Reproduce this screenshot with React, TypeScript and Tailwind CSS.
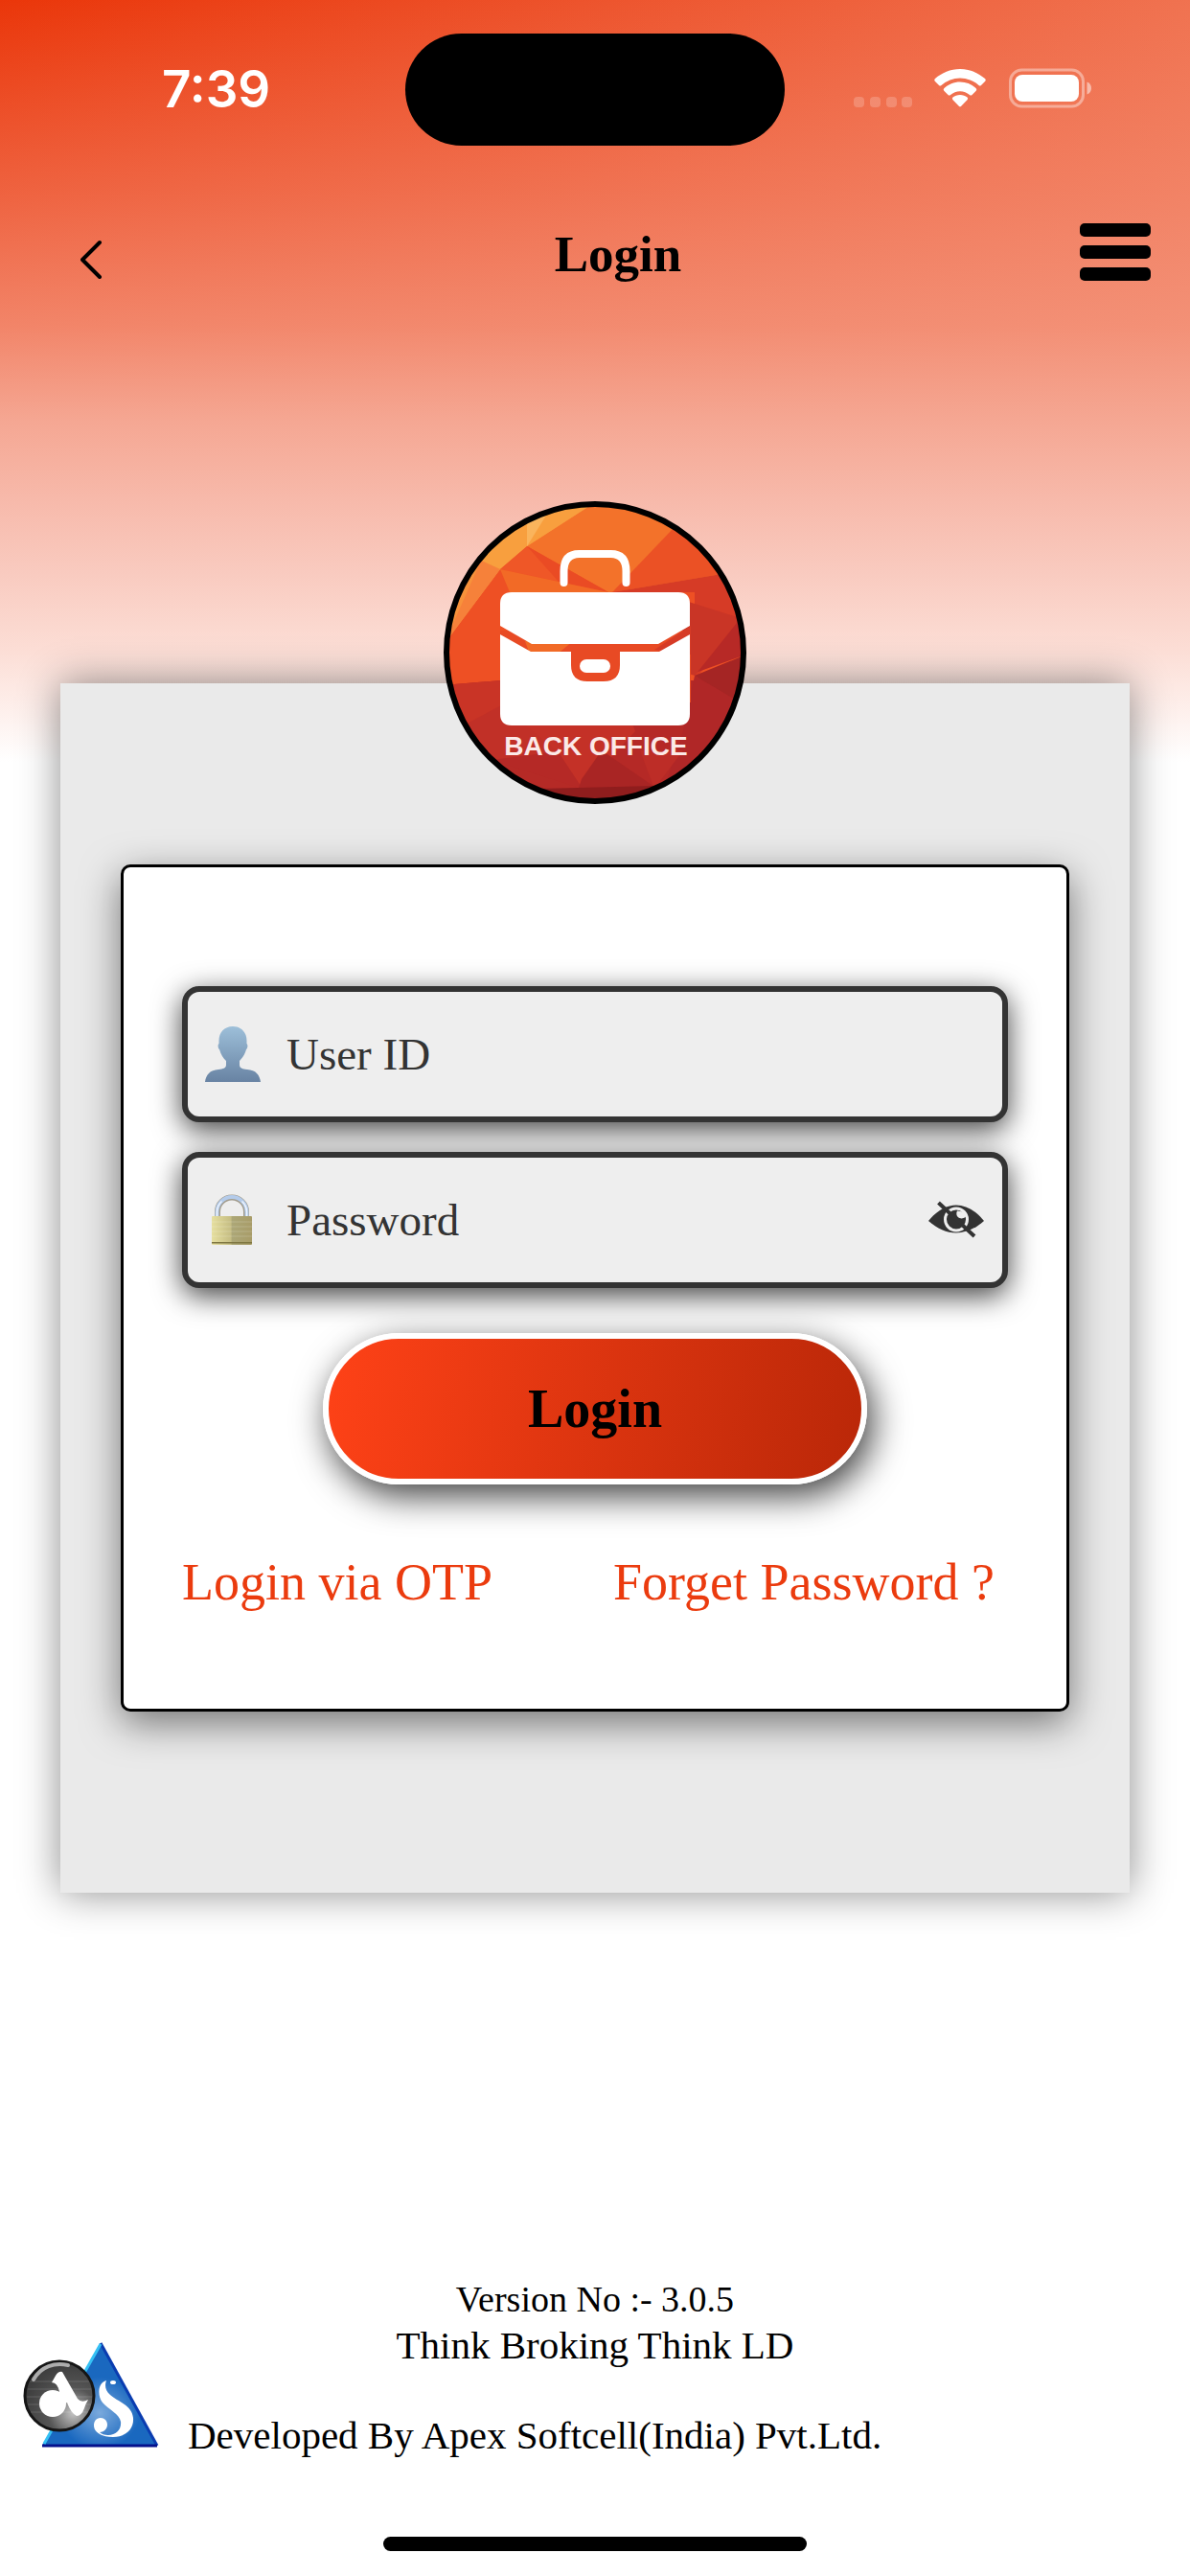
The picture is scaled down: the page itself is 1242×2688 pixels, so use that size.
import { useState } from 'react';

const App = () => {
  return (
    <div className="min-h-screen flex flex-col bg-white bg-[linear-gradient(to_bottom,rgba(244,150,126,0),rgba(244,150,126,0.46)_200px,rgba(244,152,128,0.80)_340px,#f5a793_440px,#f7b9aa_520px,#f9cbc0_600px,#fcded6_680px,#ffffff_795px),linear-gradient(to_right,#ea360a,#f07250)] text-black font-['Liberation_Serif','Times_New_Roman',serif]">
      <StatusBar />
      <Header />
      <main className="px-[63px] pt-[182px]">
        <LoginPanel />
      </main>
      <Footer />
    </div>
  );
};

const StatusBar = () => {
  return (
    <div className="h-[186px] px-[103px] grid grid-cols-[1fr_396px_1fr] text-white">
      <div className="pt-[61px] pl-[66px] text-[53px] leading-[64px] font-semibold font-['Inter',sans-serif]">7:39</div>
      <div className="mt-[35px] h-[117px] rounded-full bg-black" />
      <div className="pt-[71px] flex items-start justify-end">
        <svg width="249" height="42" viewBox="0 0 249 42" fill="none" aria-hidden="true">
          <g fill="#fff" fillOpacity="0.2">
            <rect x="1" y="30" width="11" height="11" rx="4" />
            <rect x="18" y="30" width="11" height="11" rx="4" />
            <rect x="35" y="30" width="11" height="11" rx="4" />
            <rect x="51" y="30" width="11" height="11" rx="4" />
          </g>
          <g fill="#fff">
            <path d="M112 1c10 0 19 4 26 10q1.500 1.500 0 3l-4 4q-1.200 1-2.500 0a29 29 0 0 0-39 0q-1.300 1-2.500 0l-4-4q-1.500-1.500 0-3C93 5 102 1 112 1z" />
            <path d="M112 14.500c6.500 0 12 2.400 16.500 6.500q1.500 1.500 0 3l-4 4q-1.200 1-2.500 0a15 15 0 0 0-20 0q-1.300 1-2.500 0l-4-4q-1.500-1.500 0-3c4.500-4.100 10-6.500 16.500-6.500z" />
            <path d="M112 28c3 0 5.500 1 7.500 2.600q1.400 1.300 0 2.700l-6.300 6.500q-1.200 1-2.400 0l-6.300-6.500q-1.400-1.400 0-2.700c2-1.600 4.500-2.600 7.500-2.600z" />
          </g>
          <rect x="164.500" y="2" width="76" height="38" rx="12" stroke="#fff" strokeOpacity="0.4" strokeWidth="3" />
          <rect x="169" y="7" width="67" height="28" rx="8" fill="#fff" />
          <path d="M244.500 14.500c3 1.200 4.500 3.500 4.500 6.500s-1.500 5.300-4.500 6.500z" fill="#fff" fillOpacity="0.5" />
        </svg>
      </div>
    </div>
  );
};

const Header = () => {
  return (
    <header className="h-[155px] pt-[26px] pl-[84px] pr-[41px] flex items-start justify-between">
      <button type="button" aria-label="Back" className="w-[79px] pt-[38px]">
        <svg width="24" height="42" viewBox="0 0 24 42" fill="none" stroke="#000" strokeWidth="4" strokeLinecap="round" strokeLinejoin="round">
          <path d="M20 3 2 21l18 18" />
        </svg>
      </button>
      <h1 className="pt-[23px] text-[53px] leading-[60px] font-bold">Login</h1>
      <button type="button" aria-label="Menu" className="pt-[21px]">
        <svg width="74" height="60" viewBox="0 0 74 60">
          <rect y="0" width="74" height="14" rx="5" />
          <rect y="23" width="74" height="14" rx="5" />
          <rect y="46" width="74" height="14" rx="5" />
        </svg>
      </button>
    </header>
  );
};

const LoginPanel = () => {
  return (
    <section className="mt-[190px] px-[63px] pb-[189px] flex flex-col bg-[#eaeaea] shadow-[0_0_40px_rgba(0,0,0,0.45)]">
      <div className="-mt-[190px] mb-[63px] self-center">
        <BackOfficeLogo />
      </div>
      <LoginForm />
    </section>
  );
};

const LoginForm = () => {
  const [visible, setVisible] = useState(false);

  return (
    <form
      onSubmit={(e) => e.preventDefault()}
      className="px-[61px] pt-[124px] pb-[100px] flex flex-col bg-white border-[3px] border-black rounded-[10px] shadow-[0_12px_40px_rgba(0,0,0,0.5)]"
    >
      <div className="flex flex-col gap-[31px]">
        <Field id="user-id" label="User ID" type="text" icon={<UserIcon />} />
        <Field id="password" label="Password" type={visible ? 'text' : 'password'} icon={<LockIcon />}>
          <button type="button" aria-label="Show password" onClick={() => setVisible(!visible)}>
            <EyeOffIcon />
          </button>
        </Field>
      </div>
      <button
        type="submit"
        className="mt-[47px] w-[66%] h-[158px] self-center rounded-full border-[6px] border-white bg-[linear-gradient(100deg,#ff4217,#b92708)] bg-origin-border text-[56px] leading-[64px] font-bold shadow-[6px_12px_36px_rgba(0,0,0,0.75)]"
      >
        Login
      </button>
      <div className="mt-[70px] pr-[14px] flex justify-between text-[54px] leading-[64px] text-[#eb3b0e]">
        <a href="#otp">Login via OTP</a>
        <a href="#forget">Forget Password ?</a>
      </div>
    </form>
  );
};

type FieldProps = {
  id: string;
  label: string;
  type: string;
  icon: React.ReactNode;
  children?: React.ReactNode;
};

const Field = ({ id, label, type, icon, children }: FieldProps) => {
  return (
    <div className="h-[142px] pl-[17px] pr-[18px] flex items-center bg-[#eeeeee] border-[6px] border-[#333333] rounded-[18px] shadow-[0_8px_30px_rgba(0,0,0,0.75)]">
      <label htmlFor={id} aria-label={label} className="shrink-0">
        {icon}
      </label>
      <input
        id={id}
        type={type}
        placeholder={label}
        className="ml-[26px] min-w-0 flex-1 h-[64px] bg-transparent outline-none text-[47px] leading-[64px] text-[#333333] placeholder:text-[#333333]"
      />
      {children}
    </div>
  );
};

const UserIcon = () => {
  return (
    <svg width="60" height="60" viewBox="0 0 60 60">
      <defs>
        <linearGradient id="user-fill" x1="0" y1="0" x2="0" y2="1">
          <stop offset="0" stopColor="#9dbfd9" />
          <stop offset="1" stopColor="#6883a3" />
        </linearGradient>
      </defs>
      <path
        d="M30 1c9 0 14.500 6.500 14.500 15v3c1.500 1 1 5-.5 6-1.500 5.500-4 9-7 12v4c0 3.500 3 4.500 8 5 9 .5 13 5.500 14 13H1C2 51.500 6 46.500 15 46c5-.5 8-1.500 8-5v-4c-3-3-5.500-6.500-7-12-1.500-1-2-5-.5-6v-3C15.500 7.500 21 1 30 1z"
        fill="url(#user-fill)"
      />
    </svg>
  );
};

const LockIcon = () => {
  return (
    <svg width="60" height="60" viewBox="0 0 60 60">
      <defs>
        <linearGradient id="lock-body" x1="0" y1="0" x2="1" y2="0">
          <stop offset="0" stopColor="#e6df9f" />
          <stop offset="0.48" stopColor="#c5bd83" />
          <stop offset="0.5" stopColor="#aca777" />
          <stop offset="1" stopColor="#a89c68" />
        </linearGradient>
      </defs>
      <path d="M14 27V21.500a15 15 0 0 1 30 0V27" fill="none" stroke="#a29c8d" strokeWidth="6" />
      <path d="M13.500 27V21.500a15.500 15.500 0 0 1 31 0V27" fill="none" stroke="#b4cbea" strokeWidth="4" />
      <path d="M13.500 27V21.500a15 15 0 0 1 5-11M44.500 27V21.500a15 15 0 0 0-5-11" fill="none" stroke="#eef5ff" strokeWidth="1.500" />
      <rect x="8" y="26" width="42" height="30" rx="1" fill="url(#lock-body)" />
      <path d="M8 32h42M8 37h42M8 42h42M8 47h42" stroke="#fff" strokeOpacity="0.120" strokeWidth="1.500" />
      <rect x="8" y="53" width="42" height="1.500" fill="#7f7742" />
    </svg>
  );
};

const EyeOffIcon = () => {
  return (
    <svg width="60" height="44" viewBox="0 0 60 44" fill="#333333">
      <path d="M1 23C10 12 20 6.500 30 6.500S50 12 59 23C50 31 40 35.500 30 35.500S10 31 1 23z" />
      <circle cx="30" cy="21.500" r="11.500" fill="#333333" stroke="#eeeeee" strokeWidth="3" />
      <path d="M31 12.500c-1.500 3-.5 6.500 2.500 7.500 2.500 1 5.500 0 7-2l-3-4.500z" fill="#eeeeee" />
      <path d="M11.500 4 49 39" stroke="#333333" strokeWidth="4" />
    </svg>
  );
};

const BackOfficeLogo = () => {
  return (
    <svg width="316" height="316" viewBox="0 0 316 316" role="img" aria-label="Back Office">
      <defs>
        <clipPath id="badge">
          <circle cx="158" cy="158" r="153" />
        </clipPath>
      </defs>
      <g clipPath="url(#badge)">
        <rect width="316" height="316" fill="#ee5024" />
        <path d="M0 0H316V80L172 95 87 47 60 0z" fill="#f3722a" />
        <path d="M0 0H160L87 47 59 71 0 150z" fill="#f7923b" />
        <path d="M87 47 160 0H80L40 62 59 71z" fill="#f89f3e" />
        <path d="M87 47V10H110z" fill="#fab45c" />
        <path d="M59 71 0 150 39 62z" fill="#f6813a" />
        <path d="M59 71 87 47 172 95z" fill="#ef5727" />
        <path d="M87 47 172 95 120 84z" fill="#ea4b24" />
        <path d="M59 71 172 95H69z" fill="#f26a26" />
        <path d="M240 28 176 95 290 76 316 0z" fill="#eb5125" />
        <path d="M176 95 290 76 316 130 262 185V95z" fill="#d63b26" />
        <path d="M310 115 260 180 316 160z" fill="#b72926" />
        <path d="M240 100 310 122 262 182 250 178z" fill="#c93526" />
        <path d="M0 192 60 187H262L316 160V316H0z" fill="#b52926" />
        <path d="M0 192 60 187V216L32 236 0 240z" fill="#c93426" />
        <path d="M0 245 60 213 128 260 50 270z" fill="#c13027" />
        <path d="M60 213H190L200 240 145 300 120 262z" fill="#c43127" />
        <path d="M262 182 316 160V220z" fill="#a52524" />
        <path d="M262 182 316 214 230 300 250 240z" fill="#b02727" />
        <path d="M205 260H250L220 300z" fill="#bd2d27" />
        <path d="M50 270 138 298 120 316H50z" fill="#b52a26" />
        <path d="M144 290 165 260 220 298 140 302z" fill="#a92524" />
        <path d="M100 300 220 297V316H100z" fill="#8f1d1d" />
        <path d="M59 135h199v75H59z" fill="#e84a24" />
        <path d="M220 155 258 130V160z" fill="#d63b26" />
        <path d="M85 146H135L118 160H90z" fill="#f16a27" />
      </g>
      <circle cx="158" cy="158" r="155" fill="none" stroke="#000" strokeWidth="6" />
      <path d="M125.500 85V73q0-18 16-18h33q16 0 16 18v12" fill="none" stroke="#fff" strokeWidth="8" strokeLinecap="round" />
      <path d="M71 95H245q12 0 12 12v23l-33 19H92L59 130V107q0-12 12-12z" fill="#fff" />
      <path d="M59 139l32 18h42v14q0 17 17 17h17q17 0 17-17v-14h41l32-18v83q0 12-12 12H71q-12 0-12-12z" fill="#fff" />
      <rect x="142" y="165" width="32" height="14" rx="7" fill="#fff" />
      <text x="159" y="265" textAnchor="middle" fontSize="28" fontWeight="700" fontFamily="Liberation Sans, Arial, sans-serif" fill="#fbe9e7">
        BACK OFFICE
      </text>
    </svg>
  );
};

const Footer = () => {
  return (
    <footer className="mt-auto pb-[26px] flex flex-col">
      <p className="text-center text-[38px] leading-[48px]">Version No :- 3.0.5</p>
      <p className="text-center text-[41px] leading-[48px]">Think Broking Think LD</p>
      <div className="h-[120px] pl-[23px] flex items-start gap-[29px]">
        <ApexLogo />
        <p className="pt-[46px] text-[41px] leading-[48px]">Developed By Apex Softcell(India) Pvt.Ltd.</p>
      </div>
      <div className="mt-[56px] w-[442px] h-[15px] self-center rounded-full bg-black" />
    </footer>
  );
};

const ApexLogo = () => {
  return (
    <svg width="144" height="112" viewBox="0 0 144 112" className="-mt-[28px] shrink-0" role="img" aria-label="Apex Softcell">
      <defs>
        <radialGradient id="triangle" cx="0.500" cy="0.680" r="0.350">
          <stop offset="0" stopColor="#7aa9dc" />
          <stop offset="1" stopColor="#1a68bf" />
        </radialGradient>
        <radialGradient id="ball" cx="0.700" cy="0.750" r="0.800">
          <stop offset="0" stopColor="#c4c4c4" />
          <stop offset="0.450" stopColor="#555" />
          <stop offset="1" stopColor="#3a3a3a" />
        </radialGradient>
      </defs>
      <path d="M82 2 141 109H21z" fill="url(#triangle)" />
      <path d="M82 2 141 109" stroke="#0a3cb0" strokeWidth="3" />
      <path d="M21 109H141" stroke="#04108c" strokeWidth="3" />
      <path d="M82 3 23 107" stroke="#35c1f5" strokeWidth="3" />
      <path
        d="M88 41c-10 3-9 17-4 23 6 7 18 12 19 20 1 8-5 14-13 14-4 0-7-1-9-3 5 0 8-4 8-8s-3-7-7-7c-5 0-7 4-7 8 0 7 8 12 20 12 14 0 22-9 21-20-1-13-16-17-24-24-5-4-6-10-4-15z"
        fill="#fff"
      />
      <ellipse cx="95" cy="43" rx="3" ry="2" fill="#fff" />
      <circle cx="39" cy="57" r="36" fill="url(#ball)" stroke="#151515" strokeWidth="3" />
      <path d="M8 42h62M6 50h66M5 58h68M6 66h66M9 74h60" stroke="#fff" strokeOpacity="0.150" />
      <path d="M12 40C20 26 34 22 48 25" fill="none" stroke="#ddd" strokeOpacity="0.700" strokeWidth="4" strokeLinecap="round" />
      <circle cx="32" cy="65" r="14" fill="#fff" />
      <path d="M31 43 35 36Q38 31 42 32L58 60Q62 65 69 61Q66 66 65 70Q62 78 57 78Q51 75 47 64L42 66 30 60 20 58 30 53 39 53Q37 43 31 43z" fill="#fff" />
    </svg>
  );
};

export default App;
